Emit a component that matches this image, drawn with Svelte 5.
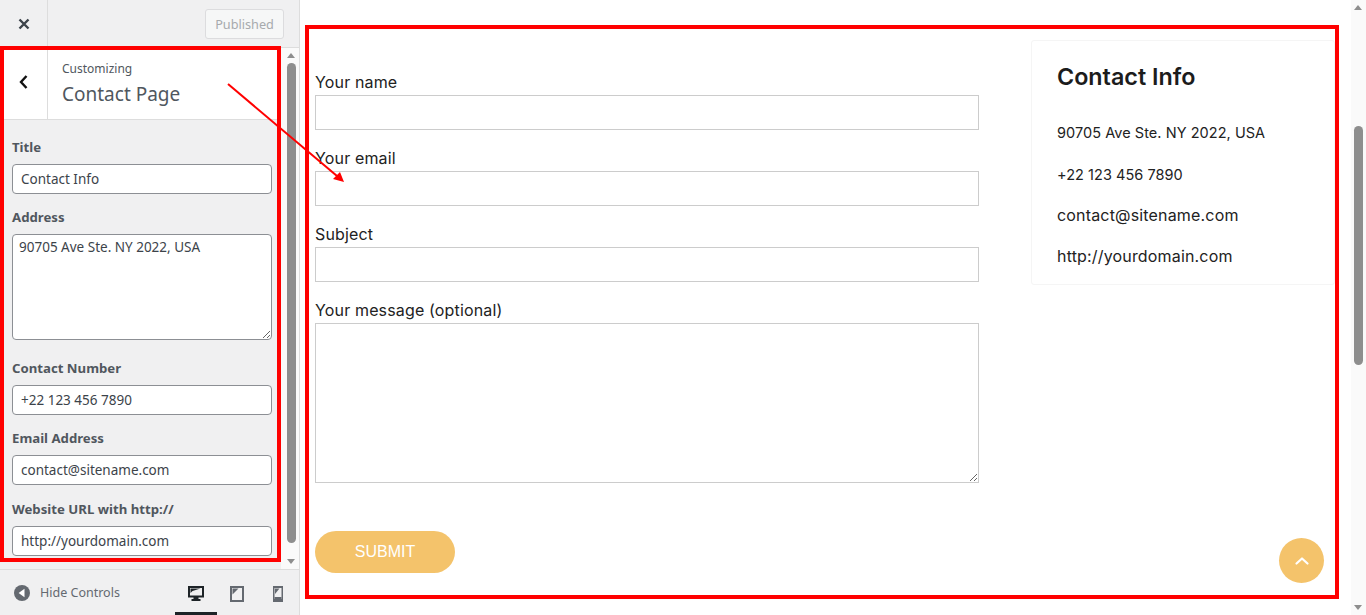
<script lang="ts">
  const controls = [
    { label: 'Title', value: 'Contact Info' },
    { label: 'Address', value: '90705 Ave Ste. NY 2022, USA', multiline: true },
    { label: 'Contact Number', value: '+22 123 456 7890' },
    { label: 'Email Address', value: 'contact@sitename.com' },
    { label: 'Website URL with http://', value: 'http://yourdomain.com' },
  ];

  const fields = ['Your name', 'Your email', 'Subject'];
  const info = [
    { text: '90705 Ave Ste. NY 2022, USA', digits: true },
    { text: '+22 123 456 7890', digits: true },
    { text: 'contact@sitename.com' },
    { text: 'http://yourdomain.com' },
  ];
</script>

<div class="customizer">
  <aside class="sidebar">
    <header class="topbar">
      <button class="close" aria-label="Close">
        <svg width="12" height="12" viewBox="0 0 12 12"><path d="M1.5 1.5l9 9M10.5 1.5l-9 9" stroke="#3c434a" stroke-width="2.4" fill="none" /></svg>
      </button>
      <button class="publish">Published</button>
    </header>

    <div class="panel-wrap">
      <div class="panel">
        <div class="section-head">
          <button class="back" aria-label="Back">
            <svg width="10" height="16" viewBox="0 0 10 16"><path d="M7.5 2L2 8l5.500 6" stroke="#111" stroke-width="2.4" fill="none" /></svg>
          </button>
          <div class="section-title">
            <span class="crumb">Customizing</span>
            <h2>Contact Page</h2>
          </div>
        </div>
        <div class="controls">
          {#each controls as c}
            <div class="control">
              <span class="control-label">{c.label}</span>
              {#if c.multiline}
                <textarea class="text-area" value={c.value}></textarea>
              {:else}
                <input class="text-input" type="text" value={c.value} />
              {/if}
            </div>
          {/each}
        </div>
      </div>
      <div class="scrollbar side-scroll">
        <span class="arrow up"></span>
        <span class="thumb"></span>
        <span class="arrow down"></span>
      </div>
    </div>

    <footer class="footer">
      <button class="hide">
        <svg width="16" height="16" viewBox="0 0 16 16"><circle cx="8" cy="8" r="8" fill="#646970" /><path d="M10.5 3.8v8.4L4.6 8z" fill="#fff" /></svg>
        <span>Hide Controls</span>
      </button>
      <div class="devices">
        <span class="device active">
          <svg width="16" height="16" viewBox="0 0 16 16"><path fill-rule="evenodd" d="M0 0h16v11.500h-5.500v1.500h2v2h-9v-2h2v-1.500H0zM2 2v7.500h12V2z" fill="#1d2327" /><path d="M2.500 2.500h10l-8 2.500-2 2z" fill="#1d2327" /></svg>
        </span>
        <span class="device">
          <svg width="14" height="16" viewBox="0 0 14 16"><path fill-rule="evenodd" d="M0 0h14v16H0zM2 2v12h10V2z" fill="#646970" /><path d="M2.500 2.500h6l-6 6z" fill="#646970" /></svg>
        </span>
        <span class="device mobile">
          <svg width="10" height="16" viewBox="0 0 10 16"><path fill-rule="evenodd" d="M0 0h10v16H0zM1.500 2v11h7V2z" fill="#646970" /><path d="M2 2.500h4.500L2 8z" fill="#646970" /><rect x="1.500" y="11" width="7" height="3" fill="#646970" /></svg>
        </span>
      </div>
      <span class="device-underline"></span>
    </footer>
  </aside>

  <main class="preview">
    <div class="page">
      <form class="contact-form">
        {#each fields as f}
          <label class="field">
            <span>{f}</span>
            <input type="text" />
          </label>
        {/each}
        <label class="field">
          <span>Your message (optional)</span>
          <textarea></textarea>
        </label>
        <button class="submit" type="button">SUBMIT</button>
      </form>
      <section class="info-card">
        <h3>Contact Info</h3>
        {#each info as line}
          <p class:digits={line.digits}>{line.text}</p>
        {/each}
      </section>
    </div>
    <div class="scrollbar page-scroll">
      <span class="arrow up"></span>
      <span class="thumb"></span>
      <span class="arrow down"></span>
    </div>
    <button class="to-top" aria-label="Back to top">
      <svg width="16" height="10" viewBox="0 0 16 10"><path d="M2.500 7.500L8 2.500l5.500 5" stroke="#fff" stroke-width="2.200" stroke-linecap="round" stroke-linejoin="round" fill="none" /></svg>
    </button>
  </main>

  <!-- annotation layer drawn over the screenshot -->
  <div class="mark mark-panel"></div>
  <div class="mark mark-page"></div>
  <svg class="pointer" width="1366" height="615" viewBox="0 0 1366 615">
    <path d="M228 84L337 176" stroke="#f00" stroke-width="2" fill="none" />
    <path d="M344 182L333 179 340 172z" fill="#f00" />
  </svg>
</div>

<style>
  :global(body) {
    margin: 0;
    background: #fff;
  }

  .customizer {
    position: relative;
    display: flex;
    width: 1366px;
    height: 615px;
    overflow: hidden;
    font-family: "Noto Sans", sans-serif;
  }

  button {
    padding: 0;
    border: 0;
    background: none;
    font: inherit;
  }

  .sidebar {
    display: flex;
    flex-direction: column;
    flex: none;
    position: relative;
    width: 300px;
    background: #f0f0f1;
    border-right: 1px solid #ddd;
    box-sizing: border-box;
  }

  .topbar {
    display: flex;
    align-items: center;
    justify-content: space-between;
    flex: none;
    height: 48px;
    padding-right: 15px;
    box-sizing: border-box;
    border-bottom: 1px solid #ddd;
  }

  .close {
    display: flex;
    align-items: center;
    justify-content: center;
    width: 48px;
    height: 47px;
    border-right: 1px solid #ddd;
    box-sizing: border-box;
  }

  .publish {
    width: 79px;
    height: 30px;
    border: 1px solid #dcdcde;
    border-radius: 3px;
    background: #f6f7f7;
    color: #a7aaad;
    font-size: 12.700px;
    box-sizing: border-box;
  }

  .panel-wrap {
    display: flex;
    flex: 1;
    min-height: 0;
  }

  .panel {
    flex: 1;
    min-width: 0;
    overflow: hidden;
  }

  .section-head {
    display: flex;
    height: 72px;
    background: #fff;
    border-bottom: 1px solid #ddd;
    box-sizing: border-box;
  }

  .back {
    display: flex;
    align-items: center;
    justify-content: center;
    flex: none;
    width: 48px;
    padding-bottom: 3px;
    border-right: 1px solid #ddd;
    box-sizing: border-box;
  }

  .section-title {
    display: flex;
    flex-direction: column;
    padding: 12px 0 0 14px;
    color: #50575e;
  }

  .crumb {
    font-size: 12px;
    line-height: 17px;
  }

  .section-title h2 {
    margin: 4px 0 0;
    font-size: 19px;
    font-weight: 400;
    line-height: 26px;
  }

  .controls {
    display: flex;
    flex-direction: column;
    padding: 17.750px 0 0 12px;
  }

  .control {
    display: flex;
    flex-direction: column;
    margin-bottom: 14.500px;
  }

  .control-label {
    margin-bottom: 7px;
    color: #50575e;
    font-size: 13.200px;
    font-weight: 700;
    line-height: 19px;
  }

  .text-input,
  .text-area {
    width: 260px;
    margin: 0;
    border: 1px solid #8c8f94;
    border-radius: 4px;
    background: #fff;
    color: #3c434a;
    font: 13.500px "Noto Sans", sans-serif;
    box-sizing: border-box;
  }

  .text-input {
    height: 30px;
    padding: 0 8px;
  }

  .text-area {
    display: block;
    height: 106px;
    padding: 3px 6px;
    margin-bottom: 4px;
  }

  .scrollbar {
    position: relative;
    flex: none;
    width: 15px;
    background: #fafafa;
  }

  .thumb {
    position: absolute;
    left: 3px;
    width: 9px;
    border-radius: 5px;
    background: #8e8e8e;
  }

  .arrow {
    position: absolute;
    left: 3px;
    width: 0;
    height: 0;
    border-left: 4.500px solid transparent;
    border-right: 4.500px solid transparent;
  }

  .arrow.up {
    top: 5px;
    border-bottom: 5px solid #8e8e8e;
  }

  .arrow.down {
    bottom: 5px;
    border-top: 5px solid #8e8e8e;
  }

  .side-scroll {
    width: 18px;
  }

  .side-scroll .arrow,
  .side-scroll .thumb {
    left: 6px;
  }

  .side-scroll .thumb {
    top: 15px;
    height: 480px;
  }

  .page-scroll .thumb {
    top: 126px;
    height: 239px;
  }

  .footer {
    position: relative;
    display: flex;
    align-items: center;
    justify-content: space-between;
    flex: none;
    height: 46px;
    padding: 0 15px 0 14px;
    border-top: 1px solid #ddd;
    box-sizing: border-box;
  }

  .hide {
    display: flex;
    align-items: center;
    gap: 10px;
    color: #646970;
    font-size: 12.500px;
  }

  .devices {
    display: flex;
    align-items: center;
    gap: 26px;
    margin-top: 2px;
    margin-right: 1px;
  }

  .device {
    display: flex;
  }

  .device.mobile {
    margin-left: 3px;
  }

  .device-underline {
    position: absolute;
    left: 175px;
    bottom: 0;
    width: 42px;
    height: 3px;
    background: #1d2327;
  }

  .preview {
    position: relative;
    display: flex;
    flex: 1;
    min-width: 0;
    justify-content: space-between;
    background: #fff;
  }

  .page {
    display: flex;
    align-items: flex-start;
    flex: 1;
    padding-left: 15px;
    color: #222;
    font-family: "Inter", sans-serif;
  }

  .contact-form {
    display: flex;
    flex-direction: column;
    flex: none;
    width: 664px;
    padding-top: 70px;
  }

  .field {
    display: flex;
    flex-direction: column;
    margin-bottom: 16px;
    font-size: 16px;
    letter-spacing: 0.150px;
    line-height: 24px;
  }

  .field span {
    margin-bottom: 1px;
  }

  .field input,
  .field textarea {
    display: block;
    width: 100%;
    margin: 0;
    border: 1px solid #ccc;
    background: #fff;
    box-sizing: border-box;
  }

  .field input {
    height: 35px;
  }

  .field textarea {
    height: 160px;
  }

  .submit {
    width: 140px;
    height: 42px;
    margin-top: 32px;
    border-radius: 21px;
    background: #f4c36b;
    color: #fff;
    font: 16px "Liberation Sans", sans-serif;
  }

  .info-card {
    flex: none;
    width: 304px;
    height: 245px;
    margin: 40px 0 0 52px;
    padding: 22px 25px 0;
    border: 1px solid #f5f5f5;
    border-radius: 3px;
    box-sizing: border-box;
  }

  .info-card h3 {
    margin: 0 0 30px;
    color: #1c1c1c;
    font-size: 23.300px;
    font-weight: 600;
    line-height: 28px;
  }

  .info-card p {
    margin: 0 0 18px;
    font-size: 16px;
    letter-spacing: 0.170px;
    line-height: 23px;
  }

  .info-card p.digits {
    margin-bottom: 18.500px;
    font-size: 14.500px;
    letter-spacing: 0.050px;
  }

  .to-top {
    position: absolute;
    left: 979px;
    top: 538px;
    display: flex;
    align-items: center;
    justify-content: center;
    width: 45px;
    height: 45px;
    border-radius: 50%;
    background: #f4c36b;
  }

  .mark {
    position: absolute;
    border: 4px solid #f00;
    box-sizing: border-box;
    pointer-events: none;
  }

  .mark-panel {
    left: 0;
    top: 46px;
    width: 281px;
    height: 516px;
  }

  .mark-page {
    left: 305px;
    top: 25px;
    width: 1034px;
    height: 574px;
  }

  .pointer {
    position: absolute;
    left: 0;
    top: 0;
    pointer-events: none;
  }
</style>
